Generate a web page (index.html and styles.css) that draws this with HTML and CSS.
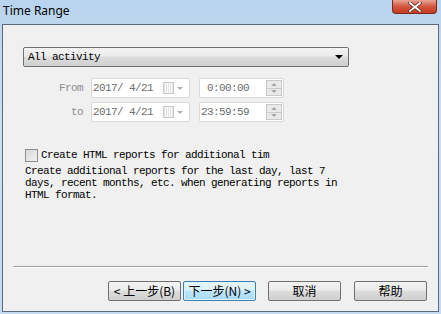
FILE: index.html
```html
<!DOCTYPE html>
<html lang="en">

<head>
    <meta charset="UTF-8">
    <title>Time Range</title>
    <link rel="stylesheet" href="styles.css">
</head>

<body>
    <div class="window">
        <div class="titlebar">
            <span class="title">Time Range</span>
            <div class="close-btn">
                <svg width="14" height="10" viewBox="0 0 14 10">
                    <path d="M2 1 L12 9 M12 1 L2 9" stroke="#5a2a20" stroke-width="3.4" stroke-linecap="square" />
                    <path d="M2 1 L12 9 M12 1 L2 9" stroke="#fff" stroke-width="1.8" stroke-linecap="square" />
                </svg>
            </div>
        </div>
        <div class="client">
            <div class="content">
                <div class="select">
                    <span>All activity</span>
                    <span class="select-arrow"></span>
                </div>

                <div class="range">
                    <span class="range-label">From</span>
                    <div class="date-box">
                        <span>2017/ 4/21</span>
                        <span class="cal-icon"></span>
                        <span class="small-arrow"></span>
                    </div>
                    <div class="time-box">
                        <span class="time-text">0:00:00</span>
                        <div class="spinner">
                            <span class="spin-up"></span>
                            <span class="spin-down"></span>
                        </div>
                    </div>

                    <span class="range-label">to</span>
                    <div class="date-box">
                        <span>2017/ 4/21</span>
                        <span class="cal-icon"></span>
                        <span class="small-arrow"></span>
                    </div>
                    <div class="time-box">
                        <span class="time-text">23:59:59</span>
                        <div class="spinner">
                            <span class="spin-up"></span>
                            <span class="spin-down"></span>
                        </div>
                    </div>
                </div>

                <div class="check-row">
                    <span class="checkbox"></span>
                    <span>Create HTML reports for additional tim</span>
                </div>
                <p class="desc">Create additional reports for the last day, last 7<br>days, recent months, etc. when generating reports in<br>HTML format.</p>
            </div>

            <div class="separator"></div>

            <div class="buttons">
                <button class="btn">&lt; 上一步(B)</button>
                <button class="btn btn-default">下一步(N) &gt;</button>
                <button class="btn btn-gap">取消</button>
                <button class="btn btn-gap2">帮助</button>
            </div>
        </div>
    </div>
</body>

</html>
```

FILE: styles.css
```css
body {
    margin: 0;
    font-family: "Liberation Mono", "Noto Sans CJK SC", monospace;
}

.window {
    width: 441px;
    height: 314px;
    display: flex;
    flex-direction: column;
    background: linear-gradient(to bottom, #b9d4ef, #cbdff3 40%, #c4dbf2);
    box-sizing: border-box;
}

.titlebar {
    height: 24px;
    display: flex;
    align-items: flex-start;
    justify-content: space-between;
}

.title {
    font-family: "Noto Sans", "DejaVu Sans", sans-serif;
    font-size: 12px;
    color: #000;
    margin: 2px 0 0 3px;
}

.close-btn {
    width: 45px;
    height: 14px;
    margin-right: 4px;
    border: 1px solid #7c2a1e;
    border-top: none;
    border-radius: 0 0 4px 4px;
    background: linear-gradient(to bottom, #e9a593, #d2563e 50%, #c33d22);
    display: flex;
    align-items: center;
    justify-content: center;
    box-sizing: border-box;
}

.client {
    flex: 1;
    margin: 0 2px 2px 2px;
    border: 1px solid #5b6b7d;
    background: #f0f0f0;
    display: flex;
    flex-direction: column;
}

.content {
    flex: 1;
    padding: 22px 0 0 20px;
    font-size: 11px;
    letter-spacing: -0.6px;
    color: #000;
}

.select {
    width: 326px;
    height: 20px;
    box-sizing: border-box;
    border: 1px solid #707070;
    border-radius: 2px;
    background: linear-gradient(to bottom, #f3f3f3, #ebebeb 45%, #dcdcdc 50%, #d0d0d0);
    display: flex;
    align-items: center;
    justify-content: space-between;
    padding: 0 5px 0 4px;
}

.select-arrow {
    width: 0;
    height: 0;
    border-left: 4px solid transparent;
    border-right: 4px solid transparent;
    border-top: 4px solid #000;
}

.range {
    display: grid;
    grid-template-columns: 60px 99px 86px;
    column-gap: 8px;
    row-gap: 4px;
    margin-top: 11px;
    align-items: center;
}

.range-label {
    text-align: right;
    color: #8d8d8d;
}

.date-box,
.time-box {
    height: 20px;
    box-sizing: border-box;
    border: 1px solid #d9d9d9;
    border-radius: 2px;
    background: #fff;
    display: flex;
    align-items: center;
    color: #6d6d6d;
}

.date-box {
    padding-left: 1px;
}

.cal-icon {
    width: 9px;
    height: 10px;
    margin-left: 10px;
    border: 1px solid #c8c8c8;
    background: repeating-linear-gradient(to right, #e4e4e4 0 1px, #fafafa 1px 2px);
}

.small-arrow {
    width: 0;
    height: 0;
    margin-left: 3px;
    border-left: 3px solid transparent;
    border-right: 3px solid transparent;
    border-top: 3px solid #b0b0b0;
}

.time-box {
    justify-content: flex-end;
    margin-left: 1px;
}

.time-text {
    margin-right: 17px;
}

.spinner {
    width: 16px;
    height: 16px;
    margin-right: 1px;
    display: flex;
    flex-direction: column;
    border: 1px solid #c9c9c9;
    box-sizing: border-box;
    background: #eaeaea;
}

.spin-up,
.spin-down {
    flex: 1;
    display: flex;
    align-items: center;
    justify-content: center;
}

.spin-up {
    border-bottom: 1px solid #c9c9c9;
}

.spin-up::after {
    content: "";
    border-left: 3px solid transparent;
    border-right: 3px solid transparent;
    border-bottom: 3px solid #a8a8a8;
}

.spin-down::after {
    content: "";
    border-left: 3px solid transparent;
    border-right: 3px solid transparent;
    border-top: 3px solid #a8a8a8;
}

.check-row {
    display: flex;
    align-items: center;
    margin-top: 26px;
    margin-left: 2px;
    height: 14px;
}

.checkbox {
    width: 13px;
    height: 13px;
    box-sizing: border-box;
    border: 1px solid #8e8f8f;
    background: linear-gradient(135deg, #d9d9d9, #f2f2f2);
    margin-right: 3px;
}

.desc {
    margin: 3px 0 0 2px;
    line-height: 12px;
}

.separator {
    margin: 0 10px 0 10px;
    height: 1px;
    background: #a0a0a0;
    border-bottom: 1px solid #fff;
}

.buttons {
    display: flex;
    justify-content: flex-end;
    padding: 13px 11px 10px 0;
}

.btn {
    width: 73px;
    height: 20px;
    margin: 0;
    padding: 0;
    font-family: "Noto Sans CJK SC", sans-serif;
    font-size: 12px;
    line-height: 16px;
    color: #000;
    border: 1px solid #707070;
    border-radius: 2px;
    background: linear-gradient(to bottom, #f2f2f2, #ebebeb 45%, #dddddd 50%, #cfcfcf);
}

.btn + .btn {
    margin-left: 2px;
}

.btn-default {
    border-color: #3c7fb1;
    background: linear-gradient(to bottom, #eaf6fd, #d9f0fc 45%, #bee6fd 50%, #a7d9f5);
    box-shadow: inset 0 0 0 1px #def2fc;
}

.btn.btn-gap {
    margin-left: 12px;
}

.btn.btn-gap2 {
    margin-left: 13px;
}
```
